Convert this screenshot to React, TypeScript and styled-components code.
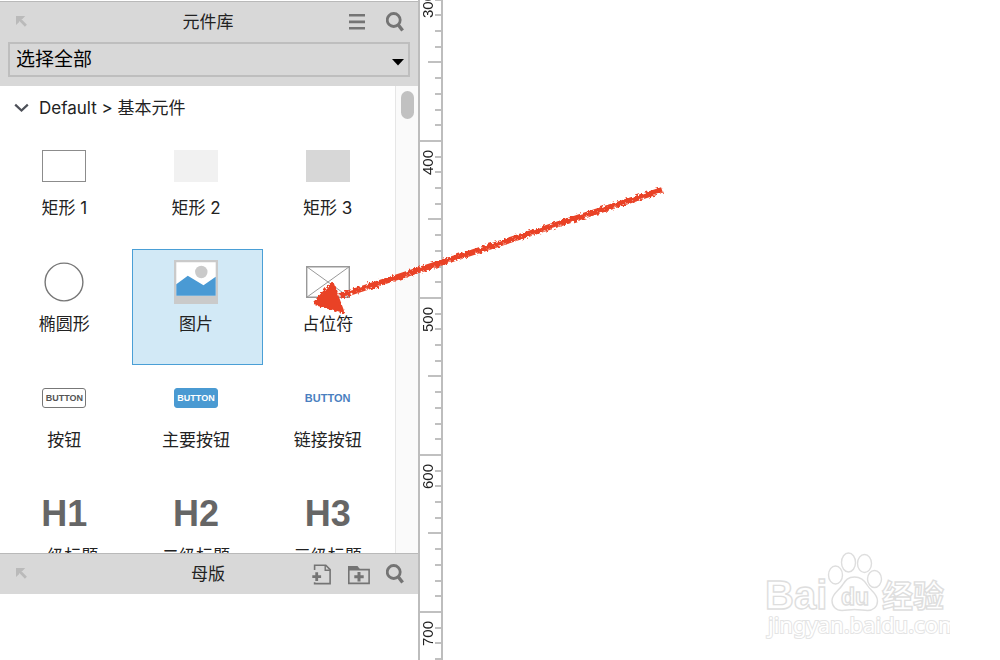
import React from "react";
import styled, { createGlobalStyle, css } from "styled-components";

const GlobalStyle = createGlobalStyle`
  *, *::before, *::after { box-sizing: border-box; }
  body {
    margin: 0;
    background: #fff;
    color: #222;
    font-family: Inter, "Noto Sans CJK SC", sans-serif;
    font-size: 17px;
    line-height: 20px;
  }
  button { font: inherit; color: inherit; border: 0; padding: 0; background: none; cursor: pointer; }
`;

const Workspace = styled.div`
  position: relative;
  display: flex;
  height: 100vh;
  overflow: hidden;
`;

const Sidebar = styled.aside`
  display: flex;
  flex-direction: column;
  flex: 0 0 420px;
  padding-top: 1px;
  border-right: 2px solid #bdbdbd;
`;

const Panel = styled.section<{ $grow?: boolean }>`
  display: flex;
  flex-direction: column;
  min-height: 0;
  ${(p) => (p.$grow ? css`flex: 1;` : css`flex: 0 0 107px;`)}
`;

const PanelHead = styled.header`
  background: #d8d8d8;
  border-top: 1px solid #b9b9b9;
`;

const TitleBar = styled.div`
  display: grid;
  grid-template-columns: 1fr auto 1fr;
  align-items: center;
  height: 40px;
  padding: 0 14px 0 12px;
`;

const Title = styled.h2`
  margin: 0;
  font-size: 17px;
  font-weight: 400;
`;

const Actions = styled.div<{ $gap: number }>`
  display: flex;
  align-items: center;
  justify-content: flex-end;
  gap: ${(p) => p.$gap}px;
`;

const IconButton = styled.button`
  display: flex;
  width: max-content;
  color: #747474;
  svg { display: block; }
`;

const LibraryPicker = styled.label`
  position: relative;
  display: block;
  margin: 0 8px;
  padding-bottom: 9px;
  svg {
    position: absolute;
    right: 6px;
    top: 17px;
    pointer-events: none;
  }
`;

const LibrarySelect = styled.select`
  display: block;
  width: 100%;
  height: 35px;
  padding: 0 28px 4px 6px;
  appearance: none;
  border: 2px solid #bebebe;
  border-radius: 0;
  background: transparent;
  color: #000;
  font-family: "Noto Sans CJK SC", sans-serif;
  font-size: 19px;
`;

const ListArea = styled.div`
  display: flex;
  flex: 1;
  min-height: 0;
  overflow: hidden;
`;

const List = styled.div`
  flex: 1;
  min-width: 0;
`;

const ScrollTrack = styled.div`
  flex: 0 0 23px;
  padding: 5px 4px 0 5px;
  background: #fafafa;
  border-left: 1px solid #e6e6e6;
`;

const ScrollThumb = styled.div`
  height: 28px;
  border-radius: 7px;
  background: #c1c1c1;
`;

const GroupToggle = styled.button`
  display: flex;
  align-items: center;
  gap: 10px;
  height: 47px;
  padding: 0 0 4px 14px;
`;

const WidgetGrid = styled.div`
  display: grid;
  grid-template-columns: repeat(3, 1fr);
  grid-auto-rows: 116px;
`;

const Widget = styled.button<{ $selected?: boolean }>`
  display: flex;
  flex-direction: column;
  align-items: center;
  gap: 10px;
  padding: 10px 4px 0 1px;
  border: 1px solid transparent;
  ${(p) => p.$selected && css`
    background: #d2e9f6;
    border-color: #4a9fd6;
  `}
`;

const Preview = styled.span`
  display: flex;
  align-items: center;
  justify-content: center;
  height: 44px;
`;

const Box = styled.span<{ $fill: string; $line?: string }>`
  width: 44px;
  height: 32px;
  background: ${(p) => p.$fill};
  border: ${(p) => (p.$line ? `1px solid ${p.$line}` : "0")};
`;

const Pill = styled.span<{ $primary?: boolean }>`
  width: 44px;
  height: 20px;
  border: 1px solid ${(p) => (p.$primary ? "#4a9ad2" : "#777")};
  border-radius: 3px;
  background: ${(p) => (p.$primary ? "#4a9ad2" : "#fff")};
  color: ${(p) => (p.$primary ? "#fff" : "#555")};
  font: bold 9px/19px "Liberation Sans", sans-serif;
  text-align: center;
`;

const LinkText = styled.span`
  color: #4a7fc0;
  font: bold 11px/20px "Liberation Sans", sans-serif;
`;

const Heading = styled.span`
  color: #666;
  font: bold 36px/44px "Liberation Sans", sans-serif;
`;

const Ruler = styled.div`
  flex: 0 0 23px;
  overflow: hidden;
  border-right: 2px solid #bdbdbd;
`;

const Scale = styled.div`
  margin-top: -17px;
`;

const Segment = styled.div`
  display: flex;
  justify-content: space-between;
  height: 157px;
  border-top: 2px solid #c0c0c0;
`;

const Mark = styled.span`
  align-self: flex-start;
  padding-bottom: 8px;
  writing-mode: vertical-rl;
  transform: rotate(180deg);
  font: 15px/16px "Liberation Sans", sans-serif;
`;

const Ticks = styled.div`
  display: flex;
  flex-direction: column;
  align-items: flex-end;
  justify-content: space-evenly;
  width: 13px;
  margin-left: -8px;
`;

const Tick = styled.i<{ $half?: boolean }>`
  width: ${(p) => (p.$half ? 13 : 6)}px;
  height: 2px;
  background: #c0c0c0;
`;

const Canvas = styled.main`
  position: relative;
  flex: 1;
  min-width: 0;
`;

const Watermark = styled.svg`
  position: absolute;
  right: 50px;
  bottom: 18px;
`;

const Pointer = styled.svg`
  position: absolute;
  left: 300px;
  top: 170px;
  pointer-events: none;
`;

const UndockIcon = () => (
  <svg width="16" height="16" viewBox="0 0 16 16" fill="#bababa">
    <path d="M4 2h9.2l-2.8 2.9-1.1.2 5.6 5.6-2 2-5.6-5.6-.3 1.1L4 11z" />
  </svg>
);

const MenuIcon = () => (
  <svg width="17" height="20" viewBox="0 0 17 20" fill="currentColor">
    <path d="M0 2h16v2.6H0zM0 8.6h16v2.6H0zM0 15h16v2.6H0z" />
  </svg>
);

const SearchIcon = () => (
  <svg width="18" height="20" viewBox="0 0 18 20" fill="none" stroke="currentColor">
    <circle cx="7.7" cy="8" r="6.5" strokeWidth="2.8" />
    <path d="M12 12.5l4.6 6" strokeWidth="3.4" />
  </svg>
);

const AddPageIcon = () => (
  <svg width="20" height="22" viewBox="0 0 20 22" fill="none" stroke="currentColor">
    <path d="M2.6 7V2.3h11.2l4.3 4.3v14H2.6v-1.3" strokeWidth="1.6" />
    <path d="M13.2 2v5.2h5" strokeWidth="1.4" />
    <path d="M.3 13.7h8.8M4.7 9.2V18" strokeWidth="2.8" />
  </svg>
);

const AddFolderIcon = () => (
  <svg width="22" height="22" viewBox="0 0 22 22" fill="none" stroke="currentColor">
    <path d="M.8 6.6h20.3v13.8H.8z" strokeWidth="1.6" />
    <path d="M0 7V3h9.5l2.7 3.4V7z" fill="currentColor" stroke="none" />
    <path d="M6.3 13.7h9.4M11 9v9.4" strokeWidth="3" />
  </svg>
);

const ImageIcon = () => (
  <svg width="44" height="44" viewBox="0 0 44 44">
    <path d="M0 0h44v44H0z" fill="#cacaca" />
    <path d="M2.3 2.3h39.4v33.4H2.3z" fill="#fff" />
    <circle cx="27.3" cy="12" r="6.2" fill="#cacaca" />
    <path d="M2.3 24.2l11.5-8.4 15.7 9.5 12.2-8.5v18.9H2.3z" fill="#4a9ad4" />
  </svg>
);

const PlaceholderIcon = () => (
  <svg width="44" height="32" viewBox="0 0 44 32" fill="none" stroke="#999">
    <path d="M.7.7h42.6v30.6H.7z" strokeWidth="1.4" />
    <path d="M.7.7l42.6 30.6M43.3.7L.7 31.3" />
  </svg>
);

const EllipseIcon = () => (
  <svg width="40" height="40" viewBox="0 0 40 40" fill="none" stroke="#777">
    <circle cx="20" cy="20" r="18.9" strokeWidth="1.4" />
  </svg>
);

const widgets: { name: string; preview: React.ReactNode; selected?: boolean }[] = [
  { name: "矩形 1", preview: <Box $fill="#fff" $line="#8c8c8c" /> },
  { name: "矩形 2", preview: <Box $fill="#f1f1f1" /> },
  { name: "矩形 3", preview: <Box $fill="#d7d7d7" /> },
  { name: "椭圆形", preview: <EllipseIcon /> },
  { name: "图片", preview: <ImageIcon />, selected: true },
  { name: "占位符", preview: <PlaceholderIcon /> },
  { name: "按钮", preview: <Pill>BUTTON</Pill> },
  { name: "主要按钮", preview: <Pill $primary>BUTTON</Pill> },
  { name: "链接按钮", preview: <LinkText>BUTTON</LinkText> },
  { name: "一级标题", preview: <Heading>H1</Heading> },
  { name: "二级标题", preview: <Heading>H2</Heading> },
  { name: "三级标题", preview: <Heading>H3</Heading> },
];

const marks = [300, 400, 500, 600, 700];

export default function App() {
  return (
    <Workspace>
      <GlobalStyle />
      <Sidebar>
        <Panel $grow>
          <PanelHead>
            <TitleBar>
              <IconButton aria-label="Undock libraries"><UndockIcon /></IconButton>
              <Title>元件库</Title>
              <Actions $gap={20}>
                <IconButton aria-label="Library menu"><MenuIcon /></IconButton>
                <IconButton aria-label="Search libraries"><SearchIcon /></IconButton>
              </Actions>
            </TitleBar>
            <LibraryPicker>
              <LibrarySelect aria-label="Library">
                <option>选择全部</option>
              </LibrarySelect>
              <svg width="12" height="7" viewBox="0 0 12 7"><path d="M0 0h12L6 6.5z" /></svg>
            </LibraryPicker>
          </PanelHead>
          <ListArea>
            <List>
              <GroupToggle aria-expanded="true">
                <svg width="15" height="10" viewBox="0 0 15 10" fill="none" stroke="#4d5058" strokeWidth="2.2">
                  <path d="M1.2 1.6l6.3 6 6.3-6" />
                </svg>
                Default &gt; 基本元件
              </GroupToggle>
              <WidgetGrid>
                {widgets.map((w) => (
                  <Widget key={w.name} $selected={w.selected}>
                    <Preview>{w.preview}</Preview>
                    {w.name}
                  </Widget>
                ))}
              </WidgetGrid>
            </List>
            <ScrollTrack><ScrollThumb /></ScrollTrack>
          </ListArea>
        </Panel>
        <Panel>
          <PanelHead>
            <TitleBar>
              <IconButton aria-label="Undock masters"><UndockIcon /></IconButton>
              <Title>母版</Title>
              <Actions $gap={16}>
                <IconButton aria-label="Add master"><AddPageIcon /></IconButton>
                <IconButton aria-label="Add folder"><AddFolderIcon /></IconButton>
                <IconButton aria-label="Search masters"><SearchIcon /></IconButton>
              </Actions>
            </TitleBar>
          </PanelHead>
        </Panel>
      </Sidebar>
      <Ruler>
        <Scale>
          {marks.map((m) => (
            <Segment key={m}>
              <Mark>{m}</Mark>
              <Ticks>
                {[1, 2, 3, 4, 5, 6, 7, 8, 9].map((n) => <Tick key={n} $half={n === 5} />)}
              </Ticks>
            </Segment>
          ))}
        </Scale>
      </Ruler>
      <Canvas>
        <Watermark width="190" height="94" viewBox="0 0 190 94" fill="#fff" stroke="#dedede" strokeWidth="1.4">
          <g fontFamily="'Liberation Sans', sans-serif" fontWeight="bold">
            <text x="5" y="61" fontSize="40">Bai</text>
            <ellipse cx="75.5" cy="27" rx="7" ry="9" />
            <ellipse cx="88.5" cy="14.5" rx="7" ry="9.5" />
            <ellipse cx="104.5" cy="15.5" rx="7" ry="9" />
            <ellipse cx="114.5" cy="31" rx="7" ry="8.5" />
            <path d="M94.500 29c7 0 10.500 4 13 8.500 3 5 10 8 10 15.500 0 6-4.500 9.500-10 9.500-4 0-8-1-13-1s-8 1-12.500 1c-6 0-10-4-10-10 0-7 7-10 10.500-15.500 3-4.500 5-8 12-8z" />
            <text x="81" y="57" fontSize="23">du</text>
            <text x="122" y="59" fontSize="31" fontFamily="'Noto Sans CJK SC', sans-serif">经验</text>
          </g>
          <text
            x="8" y="85" fontSize="22" fontFamily="'Noto Sans', sans-serif"
            stroke="#e4e4e4" strokeWidth="2" paintOrder="stroke"
          >
            jingyan.baidu.com
          </text>
        </Watermark>
      </Canvas>
      <Pointer width="380" height="160" viewBox="0 0 380 160">
        <defs>
          <filter id="crayon" x="-5%" y="-10%" width="110%" height="120%">
            <feTurbulence type="fractalNoise" baseFrequency="0.35" numOctaves="2" seed="4" result="noise" />
            <feDisplacementMap in="SourceGraphic" in2="noise" scale="5" />
          </filter>
        </defs>
        <g filter="url(#crayon)" stroke="#e94327" fill="#e94327" strokeLinejoin="round">
          <path d="M40 126L362 20" strokeWidth="6" />
          <path d="M15 133L32 114 42 141z" strokeWidth="4" />
          <path d="M50 125L362 22" stroke="#f6a596" strokeWidth="1" strokeDasharray="3 5 1 7 4 9" />
        </g>
      </Pointer>
    </Workspace>
  );
}
